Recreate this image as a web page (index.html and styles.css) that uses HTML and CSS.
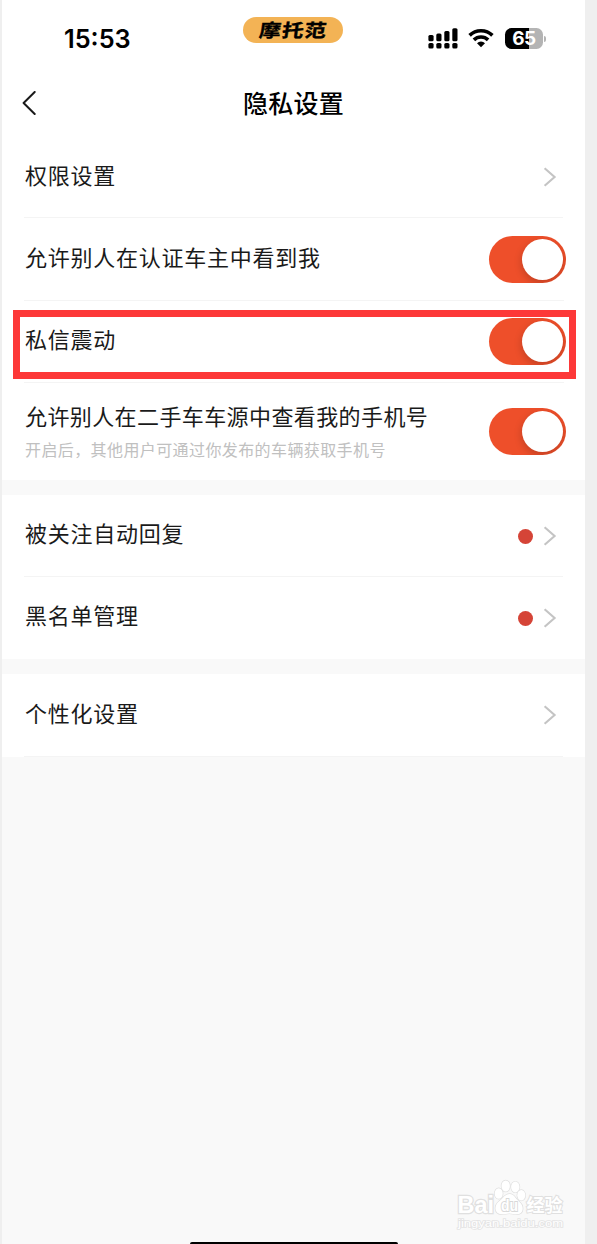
FILE: index.html
```html
<!DOCTYPE html>
<html lang="zh-CN">
<head>
<meta charset="utf-8">
<title>隐私设置</title>
<link rel="stylesheet" href="styles.css">
</head>
<body>
<svg class="defs" aria-hidden="true">
  <symbol id="chevron" viewBox="0 0 14 20"><path d="M1.600 1.2 11.600 10 1.600 18.8" fill="none" stroke="#c4c4c4" stroke-width="2.100"/></symbol>
</svg>
<main class="screen">
  <header class="status">
    <span class="time">15:53</span>
    <span class="brand"><span class="brand-text">摩托范</span></span>
    <span class="indicators">
      <svg class="signal" viewBox="0 0 30 21">
        <rect x="0.4" y="7" width="5.200" height="6.200" rx="1.5"/><rect x="8.300" y="5.600" width="5.200" height="7.600" rx="1.5"/><rect x="16.300" y="3" width="5.200" height="10.200" rx="1.5"/><rect x="24.300" y="0.2" width="5.200" height="13" rx="1.5"/>
        <rect x="0.4" y="15" width="5.200" height="5.6" rx="1.6"/><rect x="8.300" y="15" width="5.200" height="5.6" rx="1.6"/><rect x="16.300" y="15" width="5.200" height="5.6" rx="1.6"/><rect x="24.300" y="15" width="5.200" height="5.6" rx="1.6"/>
      </svg>
      <svg class="wifi" viewBox="0 0 26 20">
        <g fill="none" stroke="#000" stroke-width="3.6"><path d="M1.6 7.4a16.3 16.3 0 0 1 22.8 0"/><path d="M5.9 11.9a10.2 10.2 0 0 1 14.2 0"/></g>
        <path d="M13 19.2 9 15.2a5.8 5.8 0 0 1 8 0z"/>
      </svg>
      <span class="battery"><span class="level">65</span><i class="cap"></i></span>
    </span>
  </header>
  <nav class="titlebar">
    <svg class="back" viewBox="0 0 14 24"><path d="M12.7 1 1.6 12 12.7 23" fill="none" stroke="#1a1a1a" stroke-width="2" stroke-linecap="round" stroke-linejoin="round"/></svg>
    <h1 class="title">隐私设置</h1>
  </nav>
  <section class="group">
    <div class="row"><span class="label">权限设置</span><svg class="chevron"><use href="#chevron"/></svg></div>
    <div class="row"><span class="label">允许别人在认证车主中看到我</span><span class="switch"><i class="knob"></i></span></div>
    <div class="row"><span class="label">私信震动</span><span class="switch"><i class="knob"></i></span><div class="highlight"></div></div>
    <div class="row tall">
      <div class="copy"><span class="label tight">允许别人在二手车车源中查看我的手机号</span><span class="hint">开启后，其他用户可通过你发布的车辆获取手机号</span></div>
      <span class="switch"><i class="knob"></i></span>
    </div>
  </section>
  <section class="group">
    <div class="row"><span class="label">被关注自动回复</span><i class="dot"></i><svg class="chevron"><use href="#chevron"/></svg></div>
    <div class="row last"><span class="label">黑名单管理</span><i class="dot"></i><svg class="chevron"><use href="#chevron"/></svg></div>
  </section>
  <section class="group">
    <div class="row end"><span class="label">个性化设置</span><svg class="chevron"><use href="#chevron"/></svg></div>
  </section>
  <footer class="foot">
    <svg class="watermark" viewBox="0 0 112 56">
      <g class="wm-ink">
        <text class="wm-name" x="2.500" y="35" textLength="36.500" lengthAdjust="spacingAndGlyphs">Bai</text>
        <ellipse cx="43.700" cy="15.500" rx="4" ry="5.3"/><ellipse cx="50.700" cy="8" rx="4.2" ry="5.6"/><ellipse cx="60.300" cy="9" rx="4.2" ry="5.4"/><ellipse cx="66.300" cy="17.300" rx="4" ry="5.3"/>
        <path d="M54.700 16c4.500 0 5.500 4.500 9 7.200 6 4.500 5 13-1.500 13-3 0-5-.8-8-.8s-5 1-8 .8c-7-.4-7.500-8.700-2-13 4.500-3.300 5.500-7.200 10.500-7.200z"/>
        <text class="wm-du" x="46" y="33" textLength="17" lengthAdjust="spacingAndGlyphs">du</text>
        <text class="wm-cn" x="71.500" y="34" textLength="36" lengthAdjust="spacingAndGlyphs">经验</text>
      </g>
      <text class="wm-url" x="3" y="49" textLength="105" lengthAdjust="spacingAndGlyphs">jingyan.baidu.com</text>
    </svg>
    <div class="home"></div>
  </footer>
</main>
</body>
</html>
```
FILE: styles.css
```css
* { box-sizing: border-box; }
body {
  margin: 0;
  background: #efefef;
  font-family: Inter, "Noto Sans CJK SC", sans-serif;
  color: #1a1a1a;
}
.defs { position: absolute; width: 0; height: 0; }
.screen {
  display: flex;
  flex-direction: column;
  width: 583px;
  height: 1244px;
  margin-left: 2px;
  background: #f9f9f9;
  overflow: hidden;
}
.status {
  display: grid;
  grid-template-columns: 241px 100px 1fr;
  height: 70px;
  background: #fff;
  color: #000;
}
.time {
  padding: 24px 0 0 62px;
  font-size: 25.300px;
  font-weight: 600;
  line-height: 30px;
}
.brand {
  display: flex;
  align-items: center;
  justify-content: center;
  height: 26px;
  margin-top: 17px;
  border-radius: 13px;
  background: #f3b355;
}
.brand-text {
  font: 700 20px/26px "Noto Sans CJK SC", sans-serif;
  letter-spacing: 1px;
  margin-right: -1px;
  -webkit-text-stroke: 0.4px #000;
  transform: skewX(-8deg) scale(1.08, .9);
}
.indicators {
  display: flex;
  align-items: flex-start;
  padding: 28px 0 0 85px;
}
.signal { width: 30px; height: 21px; }
.wifi { width: 26px; height: 20px; margin-left: 10px; }
.battery {
  display: flex;
  align-items: center;
  margin-left: 11px;
}
.level {
  width: 38px;
  height: 21px;
  border-radius: 6.5px;
  background: linear-gradient(90deg, #000 24.5px, #b4b4b4 24.5px);
  color: #fff;
  font: 700 19px/21px Inter, sans-serif;
  letter-spacing: -.4px;
  text-align: center;
}
.cap {
  width: 2px;
  height: 6px;
  margin-left: 1px;
  border-radius: 0 3px 3px 0;
  background: #b4b4b4;
}
.titlebar {
  display: grid;
  grid-template-columns: 14px 1fr 14px;
  align-items: center;
  height: 66px;
  padding: 0 20px;
  background: #fff;
}
.back { width: 14px; height: 24px; }
.title {
  margin: -2px 0 0;
  color: #000;
  font: 500 25px/36px "Noto Sans CJK SC", sans-serif;
  letter-spacing: .3px;
  text-align: center;
}
.group {
  padding: 0 22px;
  margin-bottom: 15px;
  background: #fff;
}
.row {
  position: relative;
  display: flex;
  align-items: center;
  height: 82.300px;
  padding-right: 6px;
  border-bottom: 1px solid #f4f4f4;
}
.row:has(.switch) { padding-right: 0; margin-right: -3px; border-image: linear-gradient(90deg, #f4f4f4 539px, transparent 539px) 1; }
.row.tall { height: 97.100px; border: 0; }
.row.last { height: 82px; border: 0; }
.group + .group .row:first-child { height: 82px; }
.group + .group .row.end { height: 83px; }
.label {
  flex: 1;
  padding-left: 1px;
  margin-top: -6px;
  font: 400 22px/32px "Noto Sans CJK SC", sans-serif;
  letter-spacing: .75px;
  white-space: nowrap;
}
.row.last .label { margin-top: -8px; }
.row.end .label { margin-top: -6px; }
.tight { margin-top: 0; letter-spacing: .4px; }
.copy { flex: 1; display: flex; flex-direction: column; margin-top: -3px; }
.hint {
  padding-left: 1px;
  color: #c0c0c0;
  font: 400 16px/24px "Noto Sans CJK SC", sans-serif;
  letter-spacing: .4px;
  margin-top: 6px;
}
.chevron { width: 14px; height: 20px; margin-top: 1px; }
.dot {
  width: 15px;
  height: 15px;
  margin: 2px 10px 0 0;
  border-radius: 50%;
  background: #d54437;
}
.switch {
  display: flex;
  justify-content: flex-end;
  width: 77px;
  height: 47px;
  margin-top: 1px;
  padding: 3px;
  border-radius: 24px;
  background: #ee4f2a;
  overflow: hidden;
}
.knob {
  width: 41px;
  height: 41px;
  border-radius: 50%;
  background: #fff;
  box-shadow: 0 3px 8px rgba(0, 0, 0, .2);
}
.highlight {
  position: absolute;
  left: -11px;
  top: 9px;
  width: 563px;
  height: 69px;
  border: 7px solid #fd3838;
}
.foot {
  display: flex;
  flex: 1;
  flex-direction: column;
  justify-content: flex-end;
  margin-top: -15px;
}
.watermark { align-self: flex-end; width: 112px; height: 56px; margin: 0 18px 8px 0; }
.wm-ink { fill: #fff; stroke: #e0e0e0; stroke-width: 1.4px; paint-order: stroke; }
.wm-name { font: 700 23px "Liberation Sans", sans-serif; }
.wm-du { font: 700 17px "Liberation Sans", sans-serif; stroke: #d8d8d8; stroke-width: 2px; }
.wm-cn { font: 700 18.500px "Noto Sans CJK SC", sans-serif; stroke-width: 2px; }
.wm-name { stroke-width: 2.400px; }
.wm-url { font: 400 11px "Liberation Sans", sans-serif; fill: #fff; stroke: #e4e4e4; stroke-width: 1.6px; paint-order: stroke; }
.home {
  width: 208px;
  height: 2px;
  margin-left: 188px;
  border-radius: 3px 3px 0 0;
  background: #000;
}
```
